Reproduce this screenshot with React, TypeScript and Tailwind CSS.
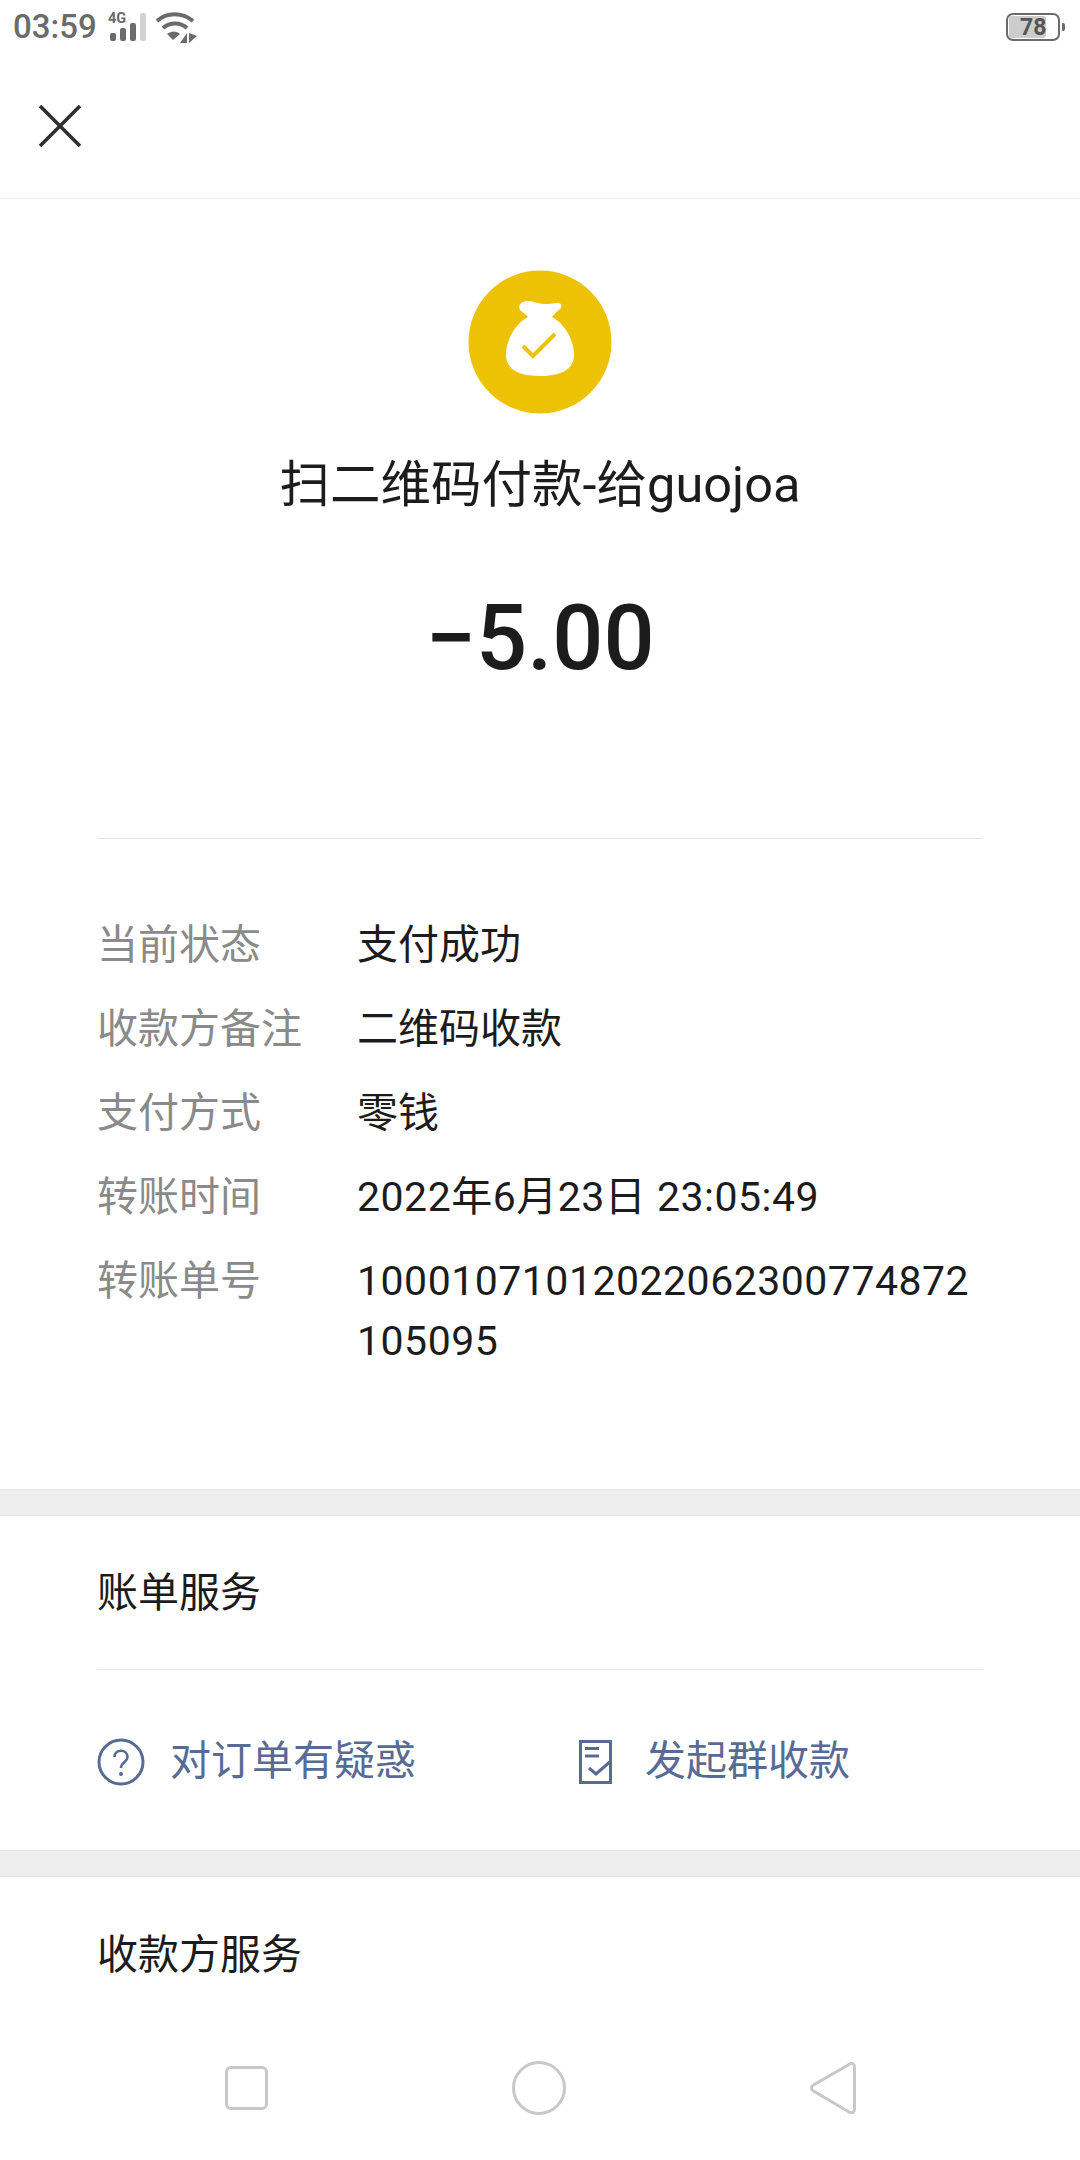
const font = { fontFamily: '"Roboto", "Noto Sans CJK SC", sans-serif' };

const rows = [
  { label: '当前状态', value: '支付成功', numeric: false },
  { label: '收款方备注', value: '二维码收款', numeric: false },
  { label: '支付方式', value: '零钱', numeric: false },
  { label: '转账时间', value: '2022年6月23日 23:05:49', numeric: true },
  { label: '转账单号', value: '10001071012022062300774872105095', numeric: true },
];

function StatusBar() {
  return (
    <div className="h-[54px] flex items-center justify-between pl-[13px] pr-[15px] text-[#6b6b6b]">
      <div className="flex items-center">
        <span className="text-[33px] leading-[40px] font-medium">03:59</span>
        <svg width="40" height="36" viewBox="0 0 40 36" className="ml-[11px]" fill="#6b6b6b">
          <text x="0" y="14" fontSize="14.5" fontWeight="700" fontFamily="Roboto">4G</text>
          <rect x="2" y="24" width="6" height="8" rx="2" />
          <rect x="12" y="19" width="6" height="13" rx="2" />
          <rect x="22" y="14" width="6" height="18" rx="2" />
          <rect x="32" y="4" width="6" height="28" rx="2" fill="#d2d2d2" />
        </svg>
        <svg width="44" height="34" viewBox="0 0 44 34" className="ml-[7px]" fill="none" stroke="#6b6b6b" strokeWidth="4">
          <path d="M2 11 C12 2 27 2 38 11" />
          <path d="M8 18 C15 12 25 12 32 18" />
          <path d="M18 30 L12 24 C16 20.5 22 20.5 25 24 Z" fill="#6b6b6b" stroke="none" />
          <path d="M32 23 V33 H25 Z" fill="#6b6b6b" stroke="none" />
          <path d="M34 23 V33 L42 26 Z" fill="#6b6b6b" stroke="none" />
        </svg>
      </div>
      <div className="flex items-center">
        <div className="w-[54px] h-[28px] rounded-[7px] border-[2px] border-[#6b6b6b] p-[1px] flex">
          <div className="w-[78%] h-full bg-[#cccccc] rounded-[3px] flex items-center justify-end text-[23px] font-bold leading-none text-[#555555]">
            78
          </div>
        </div>
        <div className="w-[3px] h-[8px] ml-[2px] bg-[#6b6b6b] rounded-r-[2px]" />
      </div>
    </div>
  );
}

function Header() {
  return (
    <div className="h-[145px] pl-[39px] flex items-center border-b border-[#ececec]">
      <svg width="42" height="42" viewBox="0 0 42 42" fill="none" stroke="#2f2f2f" strokeWidth="3.6">
        <path d="M1 1 L41 41" />
        <path d="M41 1 L1 41" />
      </svg>
    </div>
  );
}

function MoneyBag() {
  return (
    <svg width="144" height="144" viewBox="0 0 144 144">
      <circle cx="72" cy="72" r="71.5" fill="#edc204" />
      <path
        fill="#ffffff"
        d="M51 37 C52 31 60 30 66 32 C72 34 80 35 88 33 C93 32 95 36 92 39 C89 42 86 44 84 47 C97 54 106 70 106 85 C106 100 92 106 72 106 C52 106 38 100 38 85 C38 70 47 54 60 47 C58 44 54 42 52 40 Z"
      />
      <path d="M55 76 L65 86 L87 64" fill="none" stroke="#edc204" strokeWidth="4" />
    </svg>
  );
}

function ActionIcon({ type }: { type: 'question' | 'bill' }) {
  if (type === 'question') {
    return (
      <svg width="48" height="48" viewBox="0 0 48 48" fill="none" stroke="#576b95" strokeWidth="3">
        <circle cx="24" cy="24" r="22" />
        <path d="M17.5 19 C17.5 10.5 30.5 11 30.5 19 C30.5 24 24 24 24 30" strokeWidth="2.6" />
        <circle cx="24" cy="36" r="2" fill="#576b95" stroke="none" />
      </svg>
    );
  }
  return (
    <svg width="34" height="44" viewBox="0 0 34 44" fill="none" stroke="#576b95" strokeWidth="3">
      <path d="M31.5 21 V1.5 H1.5 V42.5 H31.5 V21" />
      <path d="M6 8.5 H20" />
      <path d="M6 16 H20" />
      <path d="M10 28 L17 34 L32 21" />
    </svg>
  );
}

function NavBar() {
  return (
    <div className="h-[150px] bg-white flex items-center justify-between pt-[5px] pl-[225px] pr-[224px]">
      <div className="w-[43px] h-[44px] rounded-[6px] border-[3px] border-[#c8c8c8]" />
      <div className="w-[54px] h-[54px] rounded-full border-[3px] border-[#c8c8c8]" />
      <svg width="46" height="52" viewBox="0 0 46 52" fill="none" stroke="#c8c8c8" strokeWidth="3">
        <path d="M39 2.5 C42 0.5 44.5 2 44.5 5 V47 C44.5 50 42 52 39 50 L3.5 29 C0.5 27 0.5 25 3.5 23 Z" />
      </svg>
    </div>
  );
}

export default function App() {
  return (
    <div className="w-[1080px] h-[2160px] bg-white flex flex-col overflow-hidden" style={font}>
      <StatusBar />
      <Header />

      <div className="flex-1 overflow-hidden">
        <div className="flex flex-col items-center pt-[71px]">
          <MoneyBag />
          <h1 className="mt-[43px] text-[50.5px] leading-[56px] font-normal text-[#1c1c1c]">扫二维码付款-给guojoa</h1>
          <div className="mt-[74px] text-[90px] leading-[104px] font-[550] text-[#1c1c1c]">−5.00</div>
        </div>

        <div className="mx-[97px] mt-[147px] border-t border-[#e6e6e6] pt-[76px] pb-[118px] flex flex-col gap-[24px]">
          {rows.map((row) => (
            <div key={row.label} className="flex text-[41px] leading-[60px]">
              <div className="w-[260px] shrink-0 text-[#8a8a8a]">{row.label}</div>
              <div className={`w-[622px] text-[#1c1c1c] break-all ${row.numeric ? 'tracking-[0.5px]' : ''}`}>{row.value}</div>
            </div>
          ))}
        </div>

        <div className="h-[27px] bg-[#eeeeee] border-y border-[#e6e6e6]" />

        <div className="px-[97px]">
          <div className="h-[154px] pt-[3px] flex items-center text-[41px] text-[#1c1c1c] border-b border-[#e6e6e6]">账单服务</div>
          <div className="h-[180px] pt-[3px] flex items-center text-[41px] text-[#576b95]">
            <div className="w-[482px] flex items-center gap-[25px]">
              <ActionIcon type="question" />
              <span>对订单有疑惑</span>
            </div>
            <div className="flex items-center gap-[32px]">
              <ActionIcon type="bill" />
              <span>发起群收款</span>
            </div>
          </div>
        </div>

        <div className="h-[27px] bg-[#eeeeee] border-y border-[#e6e6e6]" />

        <div className="px-[97px]">
          <div className="h-[156px] pt-[2px] flex items-center text-[41px] text-[#1c1c1c]">收款方服务</div>
        </div>
      </div>

      <NavBar />
    </div>
  );
}
